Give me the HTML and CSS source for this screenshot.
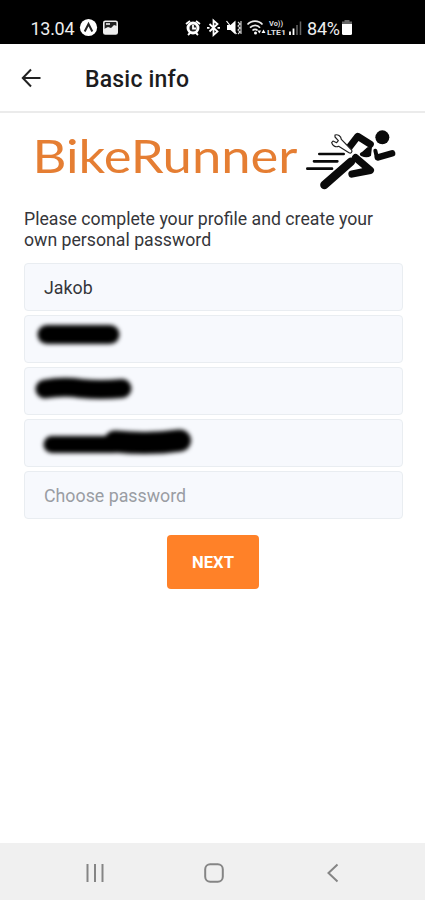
FILE: index.html
```
<!DOCTYPE html>
<html lang="en">
<head>
  <meta charset="UTF-8" />
  <meta name="viewport" content="width=device-width, initial-scale=1.0" />
  <title>BikeRunner - Basic info</title>
  <link rel="stylesheet" href="styles.css">
</head>
<body>
  <div class="status-bar">
    <svg class="status-left" width="125" height="44" viewBox="0 0 125 44">
      <text class="status-text" x="30.5" y="34.5" textLength="44">13.04</text>
      <circle cx="88.5" cy="27.5" r="8.6" fill="#fff" />
      <path d="M84.7 31.5 88.5 24l3.8 7.5" fill="none" stroke="#222" stroke-width="2" />
      <rect x="103.8" y="21.3" width="13.4" height="12.6" rx="1.5" fill="#222" stroke="#eee" stroke-width="1.6" />
      <path d="M104 32v-3l4-2 3 1 3-3 3 1v7h-13z" fill="#eee" />
      <path d="M106 24h4" stroke="#eee" stroke-width="1.6" />
    </svg>
    <svg class="status-right" width="175" height="44" viewBox="182 0 175 44">
      <!-- alarm -->
      <circle cx="193" cy="28" r="5" fill="#222" stroke="#fff" stroke-width="2.9" />
      <path d="M186 24l4-3M200 24l-4-3M188 35l2-2M198 35l-2-2M193 25v3.5h3" fill="none" stroke="#fff" stroke-width="1.8" />
      <!-- bluetooth -->
      <path d="M209.5 24l8 7.5-4 3.5V20.5l4 3.5-8 7.5" fill="none" stroke="#fff" stroke-width="1.8" />
      <path d="M207 27.8h2.5M217.500 27.8h2.5" stroke="#fff" stroke-width="1.8" />
      <!-- muted, vibrating -->
      <path d="M227 25h3.5l5-4.5v14l-5-4.5H227z" fill="#fff" />
      <path d="M226.500 21l10 13" stroke="#fff" stroke-width="1.2" />
      <path d="M238 22l2 2-2 2 2 2-2 2 2 2-2 2M241 21v13" fill="none" stroke="#ddd" stroke-width="1.1" />
      <!-- wifi -->
      <path d="M247.500 24.500c4-4.500 11-4.500 15 0M250 27.700c3-3 7.500-3 10 0M252.500 30.500c1.500-1.500 3.800-1.500 5 0" fill="none" stroke="#eee" stroke-width="1.7" />
      <circle cx="255.500" cy="33" r="1.5" fill="#fff" />
      <path d="M257.500 30.500l1.800 3 1.800-3zM261.500 33l2-3.500 2 3.500z" fill="#fff" />
      <text class="status-tiny" x="269" y="26" textLength="14" lengthAdjust="spacingAndGlyphs">Vo))</text>
      <text class="status-tiny" x="267" y="35" textLength="19" lengthAdjust="spacingAndGlyphs">LTE1</text>
      <!-- signal -->
      <path d="M290 31.500V35M293.500 28.500V35" stroke="#fff" stroke-width="1.8" />
      <path d="M297 25v10M300.500 21.500V35" stroke="#666" stroke-width="1.5" />
      <text class="status-text" x="307" y="34.500" textLength="33">84%</text>
      <!-- battery -->
      <path d="M344.500 20h5v1.500h2.500V24h-10v-2.500h2.500z" fill="#666" />
      <path d="M342 24h10v9.500q0 1.500-1.500 1.500h-7q-1.500 0-1.500-1.500z" fill="#fff" />
    </svg>
  </div>

  <header class="header">
    <svg class="back" width="20" height="20" viewBox="0 0 20 20">
      <path d="M19.500 10H2M10 1.500 1.800 10l8.200 8.500" fill="none" stroke="#222" stroke-width="2" />
    </svg>
    <h1>Basic info</h1>
  </header>

  <main class="content">
    <div class="logo">
      <svg width="270" height="75" viewBox="0 0 270 75">
        <text class="logo-text" x="2.500" y="51.300" textLength="265" lengthAdjust="spacingAndGlyphs">BikeRunner</text>
      </svg>
      <svg width="105" height="75" viewBox="0 0 315 225">
        <g fill="none" stroke="#0a0a0a" stroke-linecap="round" stroke-linejoin="round">
          <path d="M58 96h73M42 118h70M22 140h74" stroke-width="8" />
          <path d="M147 77 173 43 211 67" stroke-width="21" />
          <path d="M73 189 153 119" stroke-width="25" />
          <path d="M167 107 211 145 156 156" stroke-width="22" />
          <path d="M234 106 276 94" stroke-width="20" />
          <path d="M226 86 231 108" stroke-width="12" />
        </g>
        <circle cx="247" cy="46" r="21" fill="#0a0a0a" />
        <path d="M216 74 213 101Q202 110 183 102 174 95 187 89L202 76z" fill="#0a0a0a" />
        <!-- wrench -->
        <path d="M105 39c8-3 18 3 19 13l31 32c3 6-3 12-8 8l-31-19c-9 4-19-2-21-11l4-5 11 5 5-6-10-11z" fill="#fff" stroke="#222" stroke-width="3.500" stroke-linejoin="round" />
      </svg>
    </div>

    <p class="intro">Please complete your profile and create your<br />own personal password</p>

    <form class="form">
      <div class="field">Jakob</div>
      <div class="field">
        <svg class="scribble" width="100" height="48" viewBox="0 0 100 48">
          <path d="M23 19.500H86" stroke-width="19" />
        </svg>
      </div>
      <div class="field">
        <svg class="scribble" width="120" height="48" viewBox="0 0 120 48">
          <path d="M21 22Q39 19 57 21.500 76 23.500 98 21.500" stroke-width="19" />
        </svg>
      </div>
      <div class="field">
        <svg class="scribble" width="180" height="48" viewBox="0 0 180 48">
          <path d="M28 25.500H90" stroke-width="17" />
          <path d="M91 22.500Q126 26 156 21.500" stroke-width="22" />
        </svg>
      </div>
      <div class="field placeholder">Choose password</div>
      <button type="button" class="next">NEXT</button>
    </form>
  </main>

  <nav class="nav-bar">
    <svg width="20" height="20" viewBox="0 0 20 20"><path d="M2.500 1v18M10 1v18M17.500 1v18" /></svg>
    <svg width="20" height="20" viewBox="0 0 20 20"><rect x="1.200" y="1.200" width="17.600" height="17.600" rx="5" /></svg>
    <svg width="20" height="20" viewBox="0 0 20 20"><path d="M14.500 1.500 5.500 10l9 8.500" /></svg>
  </nav>
</body>
</html>
```
FILE: styles.css
```
* {
  box-sizing: border-box;
}
body {
  margin: 0;
  height: 900px;
  display: flex;
  flex-direction: column;
  font-family: Roboto, sans-serif;
  background-color: #fff;
  color: #35363a;
}
svg {
  display: block;
}
.status-bar {
  height: 44px;
  padding-right: 68px;
  display: flex;
  justify-content: space-between;
  background-color: #000;
}
.status-text {
  font-size: 18px;
  fill: #eee;
}
.status-tiny {
  font-size: 7.5px;
  font-weight: 700;
  fill: #ddd;
}
.header {
  height: 69px;
  padding-left: 21px;
  display: flex;
  align-items: center;
  gap: 44px;
  border-bottom: 2px solid #ebebeb;
}
.header h1 {
  margin: 3px 0 0;
  font-size: 23px;
  font-weight: 500;
  letter-spacing: 0.2px;
  color: #1c1c1e;
}
.content {
  flex: 1;
  padding: 9px 22px 0 24px;
}
.logo {
  display: flex;
  margin: 0 -6px 0 6px;
}
.logo-text {
  font-family: Lato, sans-serif;
  font-size: 45.5px;
  fill: #e57e33;
}
.intro {
  margin: 12px 0;
  font-size: 17.7px;
  line-height: 21px;
  white-space: nowrap;
}
.form {
  display: flex;
  flex-direction: column;
  gap: 4px;
}
.field {
  height: 48px;
  padding-left: 19px;
  display: flex;
  align-items: center;
  border: 1px solid #e9edf1;
  border-radius: 4px;
  background-color: #f7f9fd;
  font-size: 17.8px;
}
.placeholder {
  color: #9a9da3;
}
.scribble {
  margin-left: -20px;
  fill: none;
  stroke: #000;
  stroke-linecap: round;
  filter: blur(2px);
}
.next {
  width: 92px;
  height: 54px;
  margin: 12px 1px 0 0;
  align-self: center;
  border: none;
  border-radius: 4px;
  background-color: #ff8128;
  color: #fff;
  font-family: inherit;
  font-size: 16.6px;
  font-weight: 700;
}
.nav-bar {
  height: 57px;
  padding: 2px 82px 0 85px;
  display: flex;
  align-items: center;
  justify-content: space-between;
  background-color: #f0f0f0;
}
.nav-bar svg {
  fill: none;
  stroke: #858585;
  stroke-width: 2;
}
```
